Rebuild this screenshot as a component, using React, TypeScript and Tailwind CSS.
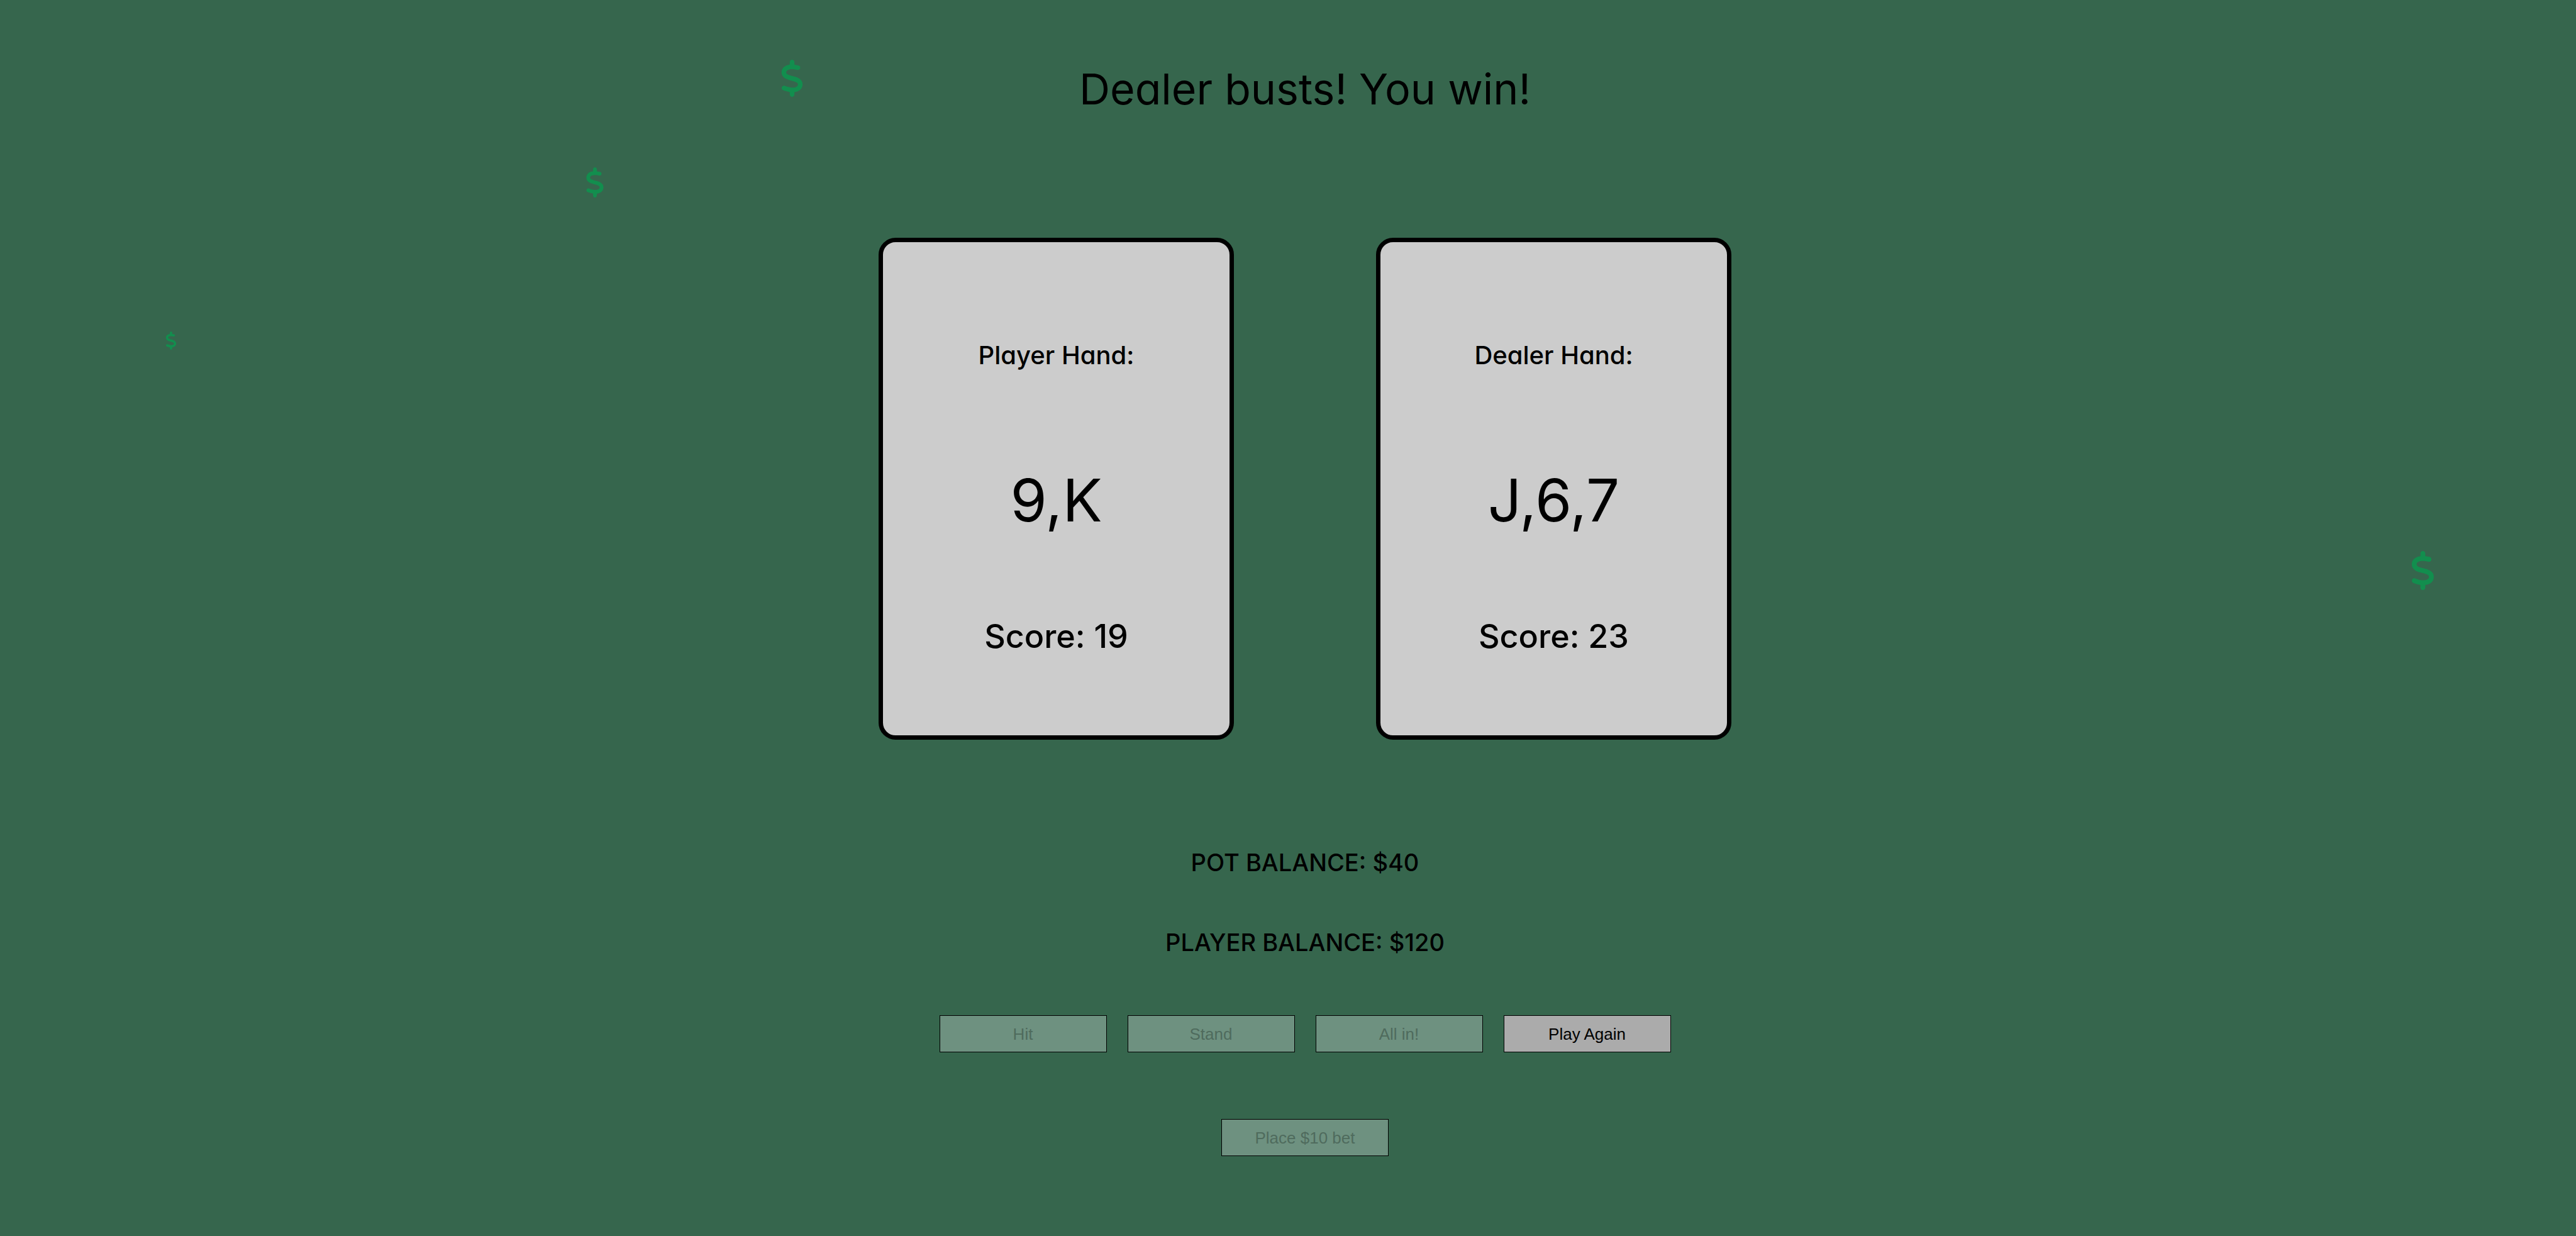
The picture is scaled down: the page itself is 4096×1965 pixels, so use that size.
import { FaDollarSign } from "react-icons/fa6";

type HandProps = { title: string; cards: string[]; score: number };

function Hand({ title, cards, score }: HandProps) {
  return (
    <section className="flex w-[565px] flex-col items-center rounded-[27px] border-[7px] border-black bg-[#cccccc] pt-[150px] pb-[117px]">
      <h2 className="text-[40px] leading-[60px] font-medium">{title}</h2>
      <p className="mt-32 text-[94px] leading-[144px]">{cards.join(",")}</p>
      <p className="mt-[105px] text-[52px] leading-[80px] font-medium">Score: {score}</p>
    </section>
  );
}

function ActionButton({ label, disabled = false }: { label: string; disabled?: boolean }) {
  return (
    <button
      type="button"
      disabled={disabled}
      className="h-[59px] w-[266px] border border-black bg-[#ababab] font-['Liberation_Sans',Arial,sans-serif] text-[26px] leading-[30px] text-black disabled:bg-[#6e9180] disabled:text-[#4f6b5d]"
    >
      {label}
    </button>
  );
}

const coins = [
  "left-[30.3%] top-[4.83%] h-[59px] w-[37px]",
  "left-[22.73%] top-[13.56%] h-[48px] w-[30px]",
  "left-[6.42%] top-[26.82%] h-[29px] w-[18px]",
  "left-[93.57%] top-[44.58%] h-[62px] w-[39px]",
];

export default function App() {
  return (
    <main className="relative flex min-h-screen flex-col items-center overflow-hidden bg-[#36664d] pt-[91px] pl-[54px] font-[Inter,'Open_Sans',sans-serif] text-black [font-feature-settings:'cv11']">
      {coins.map((place) => (
        <FaDollarSign key={place} aria-hidden="true" className={`absolute text-[#128e4e] ${place}`} />
      ))}

      <h1 className="text-[68px] leading-[100px]">Dealer busts! You win!</h1>

      <div className="mt-[187px] flex gap-[226px]">
        <Hand title="Player Hand:" cards={["9", "K"]} score={19} />
        <Hand title="Dealer Hand:" cards={["J", "6", "7"]} score={23} />
      </div>

      <div className="mt-[165px] flex flex-col items-center gap-[67px] text-[38px] leading-[60px] font-medium">
        <p>POT BALANCE: $40</p>
        <p>PLAYER BALANCE: $120</p>
      </div>

      <div className="mt-[86px] flex gap-[33px]">
        <ActionButton label="Hit" disabled />
        <ActionButton label="Stand" disabled />
        <ActionButton label="All in!" disabled />
        <ActionButton label="Play Again" />
      </div>

      <div className="mt-[106px]">
        <ActionButton label="Place $10 bet" disabled />
      </div>
    </main>
  );
}
